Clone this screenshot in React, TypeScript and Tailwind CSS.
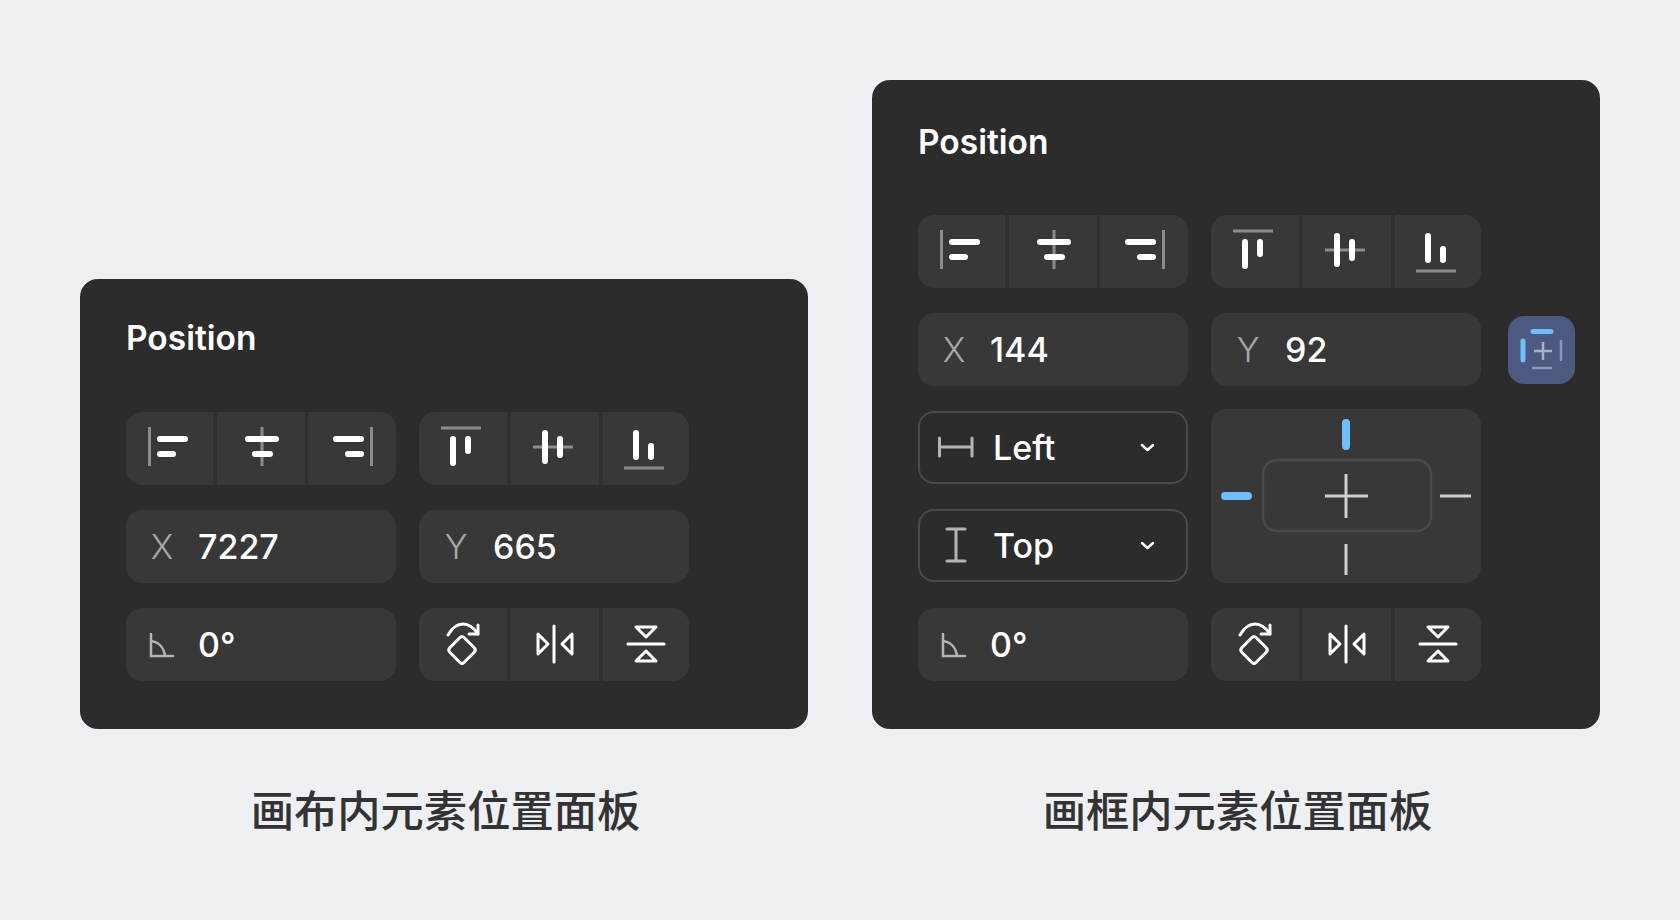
import type { ReactNode } from "react";

const WHITE = "#ffffff";
const GREY = "#8c8c8c";
const LIGHT = "#b4b4b4";
const BLUE = "#70bffa";

const Seg = ({ w, children }: { w: number; children: ReactNode }) => (
    <svg width={w} height={73} viewBox={`0 0 ${w} 73`} fill="none" strokeLinecap="round" strokeLinejoin="round" className="bg-[#383838] shrink-0">
        {children}
    </svg>
);

const Group = ({ children }: { children: ReactNode }) => (
    <div className="flex w-[270px] h-[73px] justify-between rounded-[16px] overflow-hidden bg-[#303030]">{children}</div>
);

const Guide = ({ d }: { d: string }) => <path d={d} stroke={GREY} strokeWidth={3} strokeLinecap="butt" />;
const Bar = ({ d }: { d: string }) => <path d={d} stroke={WHITE} strokeWidth={6} />;

const AlignGroups = () => (
    <div className="flex gap-[23px]">
        <Group>
            <Seg w={87}>
                <Guide d="M23.5 15V54" />
                <Bar d="M34 27H59M34 42H47" />
            </Seg>
            <Seg w={88}>
                <Guide d="M45 15V54" />
                <Bar d="M31 27H59M38 42H53" />
            </Seg>
            <Seg w={88}>
                <Guide d="M63.5 15V54" />
                <Bar d="M28 27H53M40 42H53" />
            </Seg>
        </Group>
        <Group>
            <Seg w={88}>
                <Guide d="M22 16H62" />
                <Bar d="M34 27V51M49 27V39" />
            </Seg>
            <Seg w={88}>
                <Guide d="M22 35H62" />
                <Bar d="M34 21V49M49 27V43" />
            </Seg>
            <Seg w={86}>
                <Guide d="M21 56H61" />
                <Bar d="M33 21V45M48 34V45" />
            </Seg>
        </Group>
    </div>
);

const FieldX = ({ value }: { value: string }) => (
    <div className="flex items-center w-[270px] h-[73px] rounded-[16px] bg-[#383838]">
        <span className="w-[72px] text-center text-[34px] font-light text-[#a8a8a8] shrink-0">X</span>
        <span className="text-[34px] font-medium text-white">{value}</span>
    </div>
);

const FieldY = ({ value }: { value: string }) => (
    <div className="flex items-center w-[270px] h-[73px] rounded-[16px] bg-[#383838]">
        <span className="w-[74px] text-center text-[34px] font-light text-[#a8a8a8] shrink-0">Y</span>
        <span className="text-[34px] font-medium text-white">{value}</span>
    </div>
);

const AngleField = () => (
    <div className="flex items-center w-[270px] h-[73px] rounded-[16px] bg-[#383838]">
        <svg width={72} height={73} viewBox="0 0 72 73" fill="none" stroke={LIGHT} strokeWidth={2.5} className="shrink-0">
            <path d="M25 25V48H48" />
            <path d="M25 33C33 34 38 40 39 48" />
        </svg>
        <span className="text-[34px] font-medium text-white">0°</span>
    </div>
);

const TransformGroup = () => (
    <Group>
        <Seg w={88}>
            <g stroke={WHITE} strokeWidth={3}>
                <path d="M29 27C33 20 38 16 44 16C50 16 55 20 59 26" />
                <path d="M59 17V26H50" />
                <path d="M41 29.5L31 39.5Q28.5 42 31 44.5L41 54.5Q43 56.5 45 54.5L55 44.5Q57.5 42 55 39.5L45 29.5Q43 27.500 41 29.500Z" />
            </g>
        </Seg>
        <Seg w={88}>
            <g stroke={WHITE} strokeWidth={3}>
                <path d="M43 18V54" />
                <path d="M27 26L37 36L27 46Z" />
                <path d="M61 26L51 36L61 46Z" />
            </g>
        </Seg>
        <Seg w={86}>
            <g stroke={WHITE} strokeWidth={3}>
                <path d="M25 36H61" />
                <path d="M33 19H53L43 29Z" />
                <path d="M33 53H53L43 43Z" />
            </g>
        </Seg>
    </Group>
);

const Chevron = () => (
    <svg width={15} height={9} viewBox="0 0 15 9" fill="none" stroke={WHITE} strokeWidth={2.5} strokeLinecap="round" strokeLinejoin="round" className="ml-auto mr-[31px]">
        <path d="M2 2L7.500 7L13 2" />
    </svg>
);

const Select = ({ icon, value }: { icon: ReactNode; value: string }) => (
    <div className="flex items-center w-[270px] h-[73px] rounded-[16px] border-2 border-[#4a4a4a]">
        <svg width={73} height={69} viewBox="2 2 73 69" fill="none" stroke={LIGHT} strokeWidth={3} strokeLinecap="round" className="shrink-0">
            {icon}
        </svg>
        <span className="text-[34px] font-medium text-white">{value}</span>
        <Chevron />
    </div>
);

const ConstraintBox = () => (
    <div className="w-[270px] h-[174px] rounded-[16px] bg-[#383838] overflow-hidden">
        <svg width={270} height={174} viewBox="0 0 270 174" fill="none" strokeLinecap="round">
            <rect x={52} y={51} width={168} height={71} rx={14} stroke="#4a4a4a" strokeWidth={2.500} />
            <path d="M114 87H157M135 65V109" stroke="#cfcfcf" strokeWidth={3} strokeLinecap="butt" />
            <path d="M135 14V37M14 87H37" stroke={BLUE} strokeWidth={8} />
            <path d="M229 87H260M135 135V166" stroke="#cfcfcf" strokeWidth={3} strokeLinecap="butt" />
        </svg>
    </div>
);

const ConstraintToggle = () => (
    <div className="w-[67px] h-[68px] rounded-[16px] bg-[#4c5a82] overflow-hidden shrink-0">
        <svg width={67} height={68} viewBox="0 0 67 68" fill="none" strokeLinecap="round">
            <path d="M25 15.500H43M15 25V44" stroke={BLUE} strokeWidth={5} />
            <path d="M53 25V44M25 52H43" stroke="#8f98ae" strokeWidth={2.500} />
            <path d="M26 35H44M35 26V44" stroke="#a9b0c2" strokeWidth={2.500} strokeLinecap="butt" />
        </svg>
    </div>
);

const Panel = ({ children, top }: { children: ReactNode; top: string }) => (
    <div className={`w-[728px] rounded-[18px] bg-[#2c2c2c] pl-[46px] pb-[48px] ${top}`}>
        <h2 className="text-[33.500px] leading-[40px] font-semibold text-white">Position</h2>
        {children}
    </div>
);

const Caption = ({ children }: { children: ReactNode }) => (
    <p className="mt-[50px] pl-[3px] text-center text-[43.300px] leading-[58px] font-medium text-[#333333] [font-family:'Noto_Sans_CJK_SC',sans-serif]">
        {children}
    </p>
);

export default function App() {
    return (
        <div className="flex justify-center items-end gap-[64px] w-full h-[920px] pb-[83px] bg-[#eef0f4] [font-family:Inter,sans-serif]">
            <div>
                <Panel top="pt-[39px]">
                    <div className="mt-[54px] flex flex-col gap-[25px]">
                        <AlignGroups />
                        <div className="flex gap-[23px]">
                            <FieldX value="7227" />
                            <FieldY value="665" />
                        </div>
                        <div className="flex gap-[23px]">
                            <AngleField />
                            <TransformGroup />
                        </div>
                    </div>
                </Panel>
                <Caption>画布内元素位置面板</Caption>
            </div>
            <div>
                <Panel top="pt-[42px]">
                    <div className="mt-[53px] flex flex-col gap-[25px]">
                        <AlignGroups />
                        <div className="flex items-center gap-[23px]">
                            <FieldX value="144" />
                            <FieldY value="92" />
                            <div className="ml-[4px]">
                                <ConstraintToggle />
                            </div>
                        </div>
                        <div className="flex gap-[23px] mb-[1px]">
                            <div className="flex flex-col gap-[25px]">
                                <Select value="Left" icon={<path d="M21.500 36H54M21.500 27V45M54 27V45" />} />
                                <Select value="Top" icon={<path d="M38 20V52M29 20H47M29 52H47" />} />
                            </div>
                            <div className="-my-[2px]">
                                <ConstraintBox />
                            </div>
                        </div>
                        <div className="flex gap-[23px]">
                            <AngleField />
                            <TransformGroup />
                        </div>
                    </div>
                </Panel>
                <Caption>画框内元素位置面板</Caption>
            </div>
        </div>
    );
}
